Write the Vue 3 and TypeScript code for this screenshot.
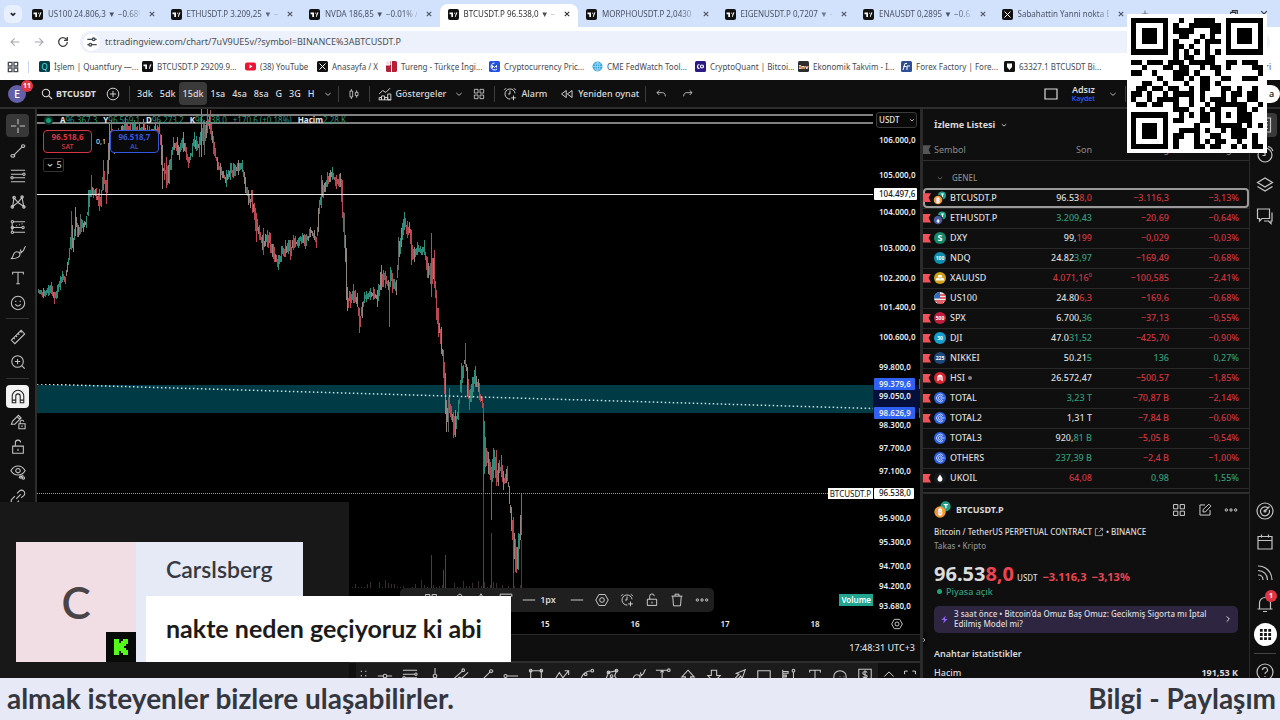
<script setup lang="ts">
const I: Record<string, string> = {
  cross: 'M9 1v6M9 11v6M1 9h6M11 9h6',
  trend: 'M4 14L14 4M3.2 13.2a1.4 1.4 0 1 0 0 2.4a1.4 1.4 0 1 0 0-2.4M14.8 2.2a1.4 1.4 0 1 0 0 2.6a1.4 1.4 0 1 0 0-2.6',
  fib: 'M1 2.500h16M1 7h13M4 11h13M1 15.500h16M17 7a1.300 1.300 0 1 0-2.600 0a1.300 1.300 0 1 0 2.600 0M3.600 11a1.300 1.300 0 1 0-2.600 0a1.300 1.300 0 1 0 2.600 0',
  pattern: 'M3 14L4.500 4.500L9 9.500L13.500 4L15.500 14L9 9.500zM4 14.500a1.400 1.400 0 1 0-2.800 0a1.400 1.400 0 1 0 2.800 0M6 4a1.400 1.400 0 1 0-2.800 0a1.400 1.400 0 1 0 2.800 0M15 3.500a1.400 1.400 0 1 0-2.800 0a1.400 1.400 0 1 0 2.800 0M17 14.500a1.400 1.400 0 1 0-2.800 0a1.400 1.400 0 1 0 2.800 0',
  forecast: 'M4 3h13M4 9.500h9M4 15h13M2.500 4.500v9M4 3a1.300 1.300 0 1 0-2.600 0a1.300 1.300 0 1 0 2.600 0M4 9.500a1.300 1.300 0 1 0-2.600 0a1.300 1.300 0 1 0 2.600 0M4 15a1.300 1.300 0 1 0-2.600 0a1.300 1.300 0 1 0 2.600 0M16 9.500a1.300 1.300 0 1 0-2.600 0a1.300 1.300 0 1 0 2.600 0M10 6.500h1M13 5.500h1M7 7.500h1',
  brush: 'M1 15.500c2.500-1 2-3.500 3.500-6c1.500-2.500 5-2.500 6.500 0c1 3-2 6-10 6zM10 7.500c.5 1.500 2 2 3.500 .5M12 5c-.5 2 1 3.500 2.500 2c1.500-1.500 1.500-4 3-5.500',
  text: 'M3 5V2.500h12V5M9 2.500v13M7 15.500h4',
  smile: 'M16.500 9a7.500 7.500 0 1 0-15 0a7.500 7.500 0 1 0 15 0M6 10.500c1.500 2.500 4.500 2.500 6 0M6.500 6.500v1.500M11.500 6.500v1.500',
  ruler: 'M1.500 12.500L12.500 1.500L16.500 5.500L5.500 16.500zM4 10l1.500 1.500M6.500 7.500L8 9M9 5l1.500 1.500M11.500 2.500L13 4',
  zoom: 'M15 8.500a6.500 6.500 0 1 0-13 0a6.500 6.500 0 1 0 13 0M13.200 13.200L16.500 16.500M8.500 5.500v6M5.500 8.500h6',
  magnet: 'M2.500 15.500V8a6.500 6.500 0 0 1 13 0v7.500h-4V8a2.500 2.500 0 0 0-5 0v7.500zM2.500 12.500h4M11.500 12.500h4',
  pencilLock: 'M1.500 11.500L3 8L9.500 1.500L12.500 4.500L5.500 11.500zM8 3l3 3M10 11h7v5.500h-7zM11.500 11V9.500a2 2 0 0 1 4-1M13.500 13v1.500',
  lock: 'M3 8h12v8H3zM6 8V4.500a3 3 0 0 1 6-.5M9 11v2.500',
  eye: 'M1 7.500c4-7 12-7 16 0c-4 6.500-12 6.500-16 0zM11.500 7.500a2.500 2.500 0 1 0-5 0a2.500 2.500 0 1 0 5 0M10 15.500l5-3M12 13.500a1.300 1.300 0 1 0 .1 0M15 14.500a1.300 1.300 0 1 0 .1 0',
  link: 'M7 11L12 6M8 5l2.500-2.500a3 3 0 0 1 5 5L12.500 10M5.500 8L2.500 11a3 3 0 0 0 5 5L10 13',
  search: 'M13 7.500a5.500 5.500 0 1 0-11 0a5.500 5.500 0 1 0 11 0M11.500 11.500L16.500 16.500',
  plusC: 'M16.500 9a7.500 7.500 0 1 0-15 0a7.500 7.500 0 1 0 15 0M9 5v8M5 9h8',
  chev: 'M5 7.500L9 11L13 7.500',
  right: 'M7 5L11 9L7 13',
  candles: 'M3 4.500h4v9H3zM5 1.500v3M5 13.500v3M11 6.500h4v5h-4zM13 3.500v3M13 11.500v3',
  indic: 'M1.500 9L6 4.500L10 7L15.500 1.500M1.500 16.500v-3h3v3M4.500 16.500v-5h4v5M8.500 16.500v-3h4v3M12.500 16.500V9h4v7.500zM1 16.500h16',
  grid: 'M2 2h5.500v5.500H2zM10.500 2H16v5.500h-5.500zM2 10.500h5.500V16H2zM10.500 10.500H16V16h-5.500z',
  alarm: 'M15.500 8a6.500 6.500 0 1 0-6 7.500M9 4.500V9H6.500M1.500 4L4 1.500M14 1.500L16.500 4M10.500 14h6M13.500 11v6',
  replay: 'M8 4.500v9L2 9zM15.500 4.500v9L9.500 9z',
  undo: 'M3 7h8c3 0 4.500 2 4.500 5.500M6.500 3.500L3 7L6.500 10.500',
  redo: 'M15 7H7c-3 0-4.500 2-4.500 5.500M11.500 3.500L15 7L11.500 10.500',
  square: 'M3 4h12v10H3z',
  hex: 'M5 2h8l4 7l-4 7H5L1 9zM12 9a3 3 0 1 0-6 0a3 3 0 1 0 6 0',
  trash: 'M2 4h14M6.500 4V1.500h5V4M3.500 4L4.500 16.500h9L14.500 4',
  dots: 'M4.500 9a1.500 1.500 0 1 0-3 0a1.500 1.500 0 1 0 3 0M10.500 9a1.500 1.500 0 1 0-3 0a1.500 1.500 0 1 0 3 0M16.500 9a1.500 1.500 0 1 0-3 0a1.500 1.500 0 1 0 3 0',
  line: 'M1 9h16',
  list: 'M3.500 2h11v14h-11zM6 5.500h6M6 9h6M6 12.500h6',
  clock: 'M16 10a7 7 0 1 0-14 0a7 7 0 1 0 14 0M9 6v4.500H6.500M12 1.500c2.500.5 4 2 5 4.500',
  layers: 'M1.500 6.500L9 2L16.500 6.500L9 11zM1.500 10.500L9 15L16.500 10.500',
  chat: 'M1.500 2h12v9.500H6L3.500 14v-2.500h-2zM16 5.500v8.500h-1v2.500L12.500 14H8',
  target: 'M17 9a8 8 0 1 0-16 0a8 8 0 1 0 16 0M12.500 6.500a4.500 4.500 0 1 0 .8 1.500M9 9l4.500-4.500M10 9a1 1 0 1 0-2 0a1 1 0 1 0 2 0',
  cal: 'M2 3.500h14v12.500H2zM2 7.500h14M5.500 1.500v3M12.500 1.500v3',
  rss: 'M2 2c8 0 14 6 14 14M2 6.500c5.500 0 9.500 4 9.500 9.500M2 11c3 0 5 2 5 5M3 15.500h.5',
  bell: 'M1.500 14h15M3.500 14V8a5.500 5.500 0 0 1 11 0v6M7 16.500h4',
  help: 'M17 9a8 8 0 1 0-16 0a8 8 0 1 0 16 0M6.500 7a2.500 2.500 0 1 1 3.500 2.300c-.8.4-1 .8-1 1.700M9 13v1',
  edit: 'M9 2.500H2.500v13h13V9M6.500 11.500v-3L14 1.500L16.500 4L9.500 11.500z',
  back: 'M15.500 9H3M8.500 3.500L3 9L8.500 14.500',
  fwd: 'M2.500 9H15M9.500 3.500L15 9L9.500 14.500',
  reload: 'M14.500 5.500A6.500 6.500 0 1 0 15.500 9M15.500 1.500V6.500H10.500',
  tune: 'M2 5h7M13.500 5h2.500M2 13h2.500M9 13h7M13.500 5a2 2 0 1 0-4 0a2 2 0 1 0 4 0M8.500 13a2 2 0 1 0-4 0a2 2 0 1 0 4 0',
  close: 'M4 4l10 10M14 4L4 14',
  ext: 'M7 3H2.500v12.500H15V11M10.500 2.500H15.500V7.500M15.500 2.500L8.500 9.500',
  hline: 'M1 9h6M11 9h6M11 9a2 2 0 1 0-4 0a2 2 0 1 0 4 0',
  vline: 'M9 0v7M9 11v7M11 9a2 2 0 1 0-4 0a2 2 0 1 0 4 0',
  channel: 'M1 12L11 3M6 15L17 5M13 2.500a1.500 1.500 0 1 0-3 0a1.500 1.500 0 1 0 3 0M9 12a1.500 1.500 0 1 0-3 0',
  ray: 'M4.500 9H17M4.500 9a1.700 1.700 0 1 0-3.400 0a1.700 1.700 0 1 0 3.400 0',
  rect: 'M3 3h12v12H3zM4.500 3a1.500 1.500 0 1 0-3 0a1.500 1.500 0 1 0 3 0M16.500 3a1.500 1.500 0 1 0-3 0a1.500 1.500 0 1 0 3 0',
  zig: 'M1 13L6 5L10 11L16.500 3M12 3h4.500v5',
  arc: 'M2 14C3 7 8 3 14 3M16.500 3a1.500 1.500 0 1 0-3 0a1.500 1.500 0 1 0 3 0M9 7a1.500 1.500 0 1 0-3 0a1.500 1.500 0 1 0 3 0',
  path: 'M2 13L5 5L14 3L12 9L15 13L8 11zM6.500 5a1.500 1.500 0 1 0-3 0a1.500 1.500 0 1 0 3 0M15.500 3a1.500 1.500 0 1 0-3 0a1.500 1.500 0 1 0 3 0M10 9a1.500 1.500 0 1 0-3 0a1.500 1.500 0 1 0 3 0',
  anchor: 'M1 2.500h13M8 2.500V16M17 2.500a1.500 1.500 0 1 0-3 0a1.500 1.500 0 1 0 3 0M6 5l2-2l2 2',
  up: 'M9 2.500L16 10h-4v6H6v-6H2z',
  down: 'M6 2.500h6v6h4L9 15.500L2 8.500h4z',
  arrow: 'M2 16L1.500 15L9 7L6 6L16 2L12.500 12L11 9L4 16z',
  box: 'M2 3h14v12H2z',
  volp: 'M2 2v14M2 4h6v2H2M2 8h4v2H2M2 12h6M14 4v12M15.500 3a1.500 1.500 0 1 0-3 0a1.500 1.500 0 1 0 3 0',
  circ: 'M16 10a7 7 0 1 0-14 0a7 7 0 1 0 14 0M9 9.500v1M13.500 9.500v1',
  dollar: 'M2 1.500h14v12H2zM9 2.500v10M11.500 5c-1-1.500-5-1.500-5 .8c0 2.500 5 1 5 3.500c0 2-4 2-5 .3M9 13.500v4',
  chevUp: 'M3 11L9 5L15 11',
  brk: 'M2 8V4h4M12 4h4v4',
  grip: 'M6 3v1.500M6 8v1.500M6 13v1.500M11 3v1.500M11 8v1.500M11 13v1.500',
}

const tabs = [
  { t: 'US100 24.806,3 ▼ −0.68%' }, { t: 'ETHUSDT.P 3.209,25 ▼ −0' }, { t: 'NVDA 186,85 ▼ −0.01% A' },
  { t: 'BTCUSDT.P 96.538,0 ▼ −3', on: true }, { t: 'MORPHOUSDT.P 2,0430 ▼' }, { t: 'EIGENUSDT.P 0,7207 ▼ −' },
  { t: 'ENAUSDT 0,2895 ▼ −0.62' }, { t: 'Sabahattin Yanni nokta Et', x: true },
]
const marks = [
  { t: 'İşlem | Quantfury —...', c: '#0c3b45', g: 'Q', w: '' }, { t: 'BTCUSDT.P 29209.9...', c: '#111', g: 'tv', w: '' },
  { t: '(38) YouTube', c: '#f01232', g: 'yt', w: 'w72' }, { t: 'Anasayfa / X', c: '#111', g: 'x', w: 'w69' },
  { t: 'Tureng - Türkçe İngi...', c: '#b3203a', g: 't', w: '' }, { t: 'Cryptocurrency Pric...', c: '#2451e0', g: 'm', w: '' },
  { t: 'CME FedWatch Tool...', c: '#35a5dc', g: 'globe', w: '' }, { t: 'CryptoQuant | Bitcoi...', c: '#2b1a86', g: 'cq', w: '' },
  { t: 'Ekonomik Takvim - I...', c: '#2c2c2c', g: 'Inv', w: '' }, { t: 'Forex Factory | Fore...', c: '#2e4f95', g: 'ff', w: '' },
  { t: '63327.1 BTCUSDT Bi...', c: '#111', g: 'sh', w: '' },
]
const frames = ['3dk', '5dk', '15dk', '1sa', '4sa', '8sa', 'G', '3G', 'H']
const tools = [
  ['cross', 'trend', 'fib', 'pattern', 'forecast', 'brush', 'text', 'smile'],
  ['ruler', 'zoom'],
  ['magnet', 'pencilLock', 'lock', 'eye', 'link'],
]

type Row = { s: string; a: string; b: string; bc: string; d: string; p: string; up?: boolean; flag: boolean; k: string; c: string; g?: string; sup?: string; dot?: boolean }
const rows: Row[] = [
  { s: 'BTCUSDT.P', a: '96.53', b: '8,0', bc: 'r', d: '−3.116,3', p: '−3,13%', flag: true, k: 'pair', c: '#f09a36', g: '₿' },
  { s: 'ETHUSDT.P', a: '', b: '3.209,43', bc: 'g', d: '−20,69', p: '−0,64%', flag: true, k: 'pair', c: '#4a5a9e', g: '♦' },
  { s: 'DXY', a: '99,', b: '199', bc: 'r', d: '−0,029', p: '−0,03%', flag: true, k: 'txt', c: '#178a6c', g: 'S' },
  { s: 'NDQ', a: '24.82', b: '3,97', bc: 'g', d: '−169,49', p: '−0,68%', flag: false, k: 'txt', c: '#0f8fb0', g: '100' },
  { s: 'XAUUSD', a: '', b: '4.071,16', sup: '0', bc: 'r', d: '−100,585', p: '−2,41%', flag: true, k: 'gold', c: '#cfa21a' },
  { s: 'US100', a: '24.80', b: '6,3', bc: 'r', d: '−169,6', p: '−0,68%', flag: false, k: 'us', c: '#e8e8ee' },
  { s: 'SPX', a: '6.700,', b: '36', bc: 'g', d: '−37,13', p: '−0,55%', flag: true, k: 'txt', c: '#c21f3f', g: '500' },
  { s: 'DJI', a: '47.0', b: '31,52', bc: 'g', d: '−425,70', p: '−0,90%', flag: true, k: 'txt', c: '#159fd0', g: '30' },
  { s: 'NIKKEI', a: '50.21', b: '5', bc: 'g', d: '136', p: '0,27%', up: true, flag: true, k: 'txt', c: '#1f4a7d', g: '225' },
  { s: 'HSI', dot: true, a: '26.572,47', b: '', bc: 'g', d: '−500,57', p: '−1,85%', flag: true, k: 'hsi', c: '#d92632' },
  { s: 'TOTAL', a: '', b: '3,23 T', bc: 'g', d: '−70,87 B', p: '−2,14%', flag: true, k: 'total', c: '#2f62e6' },
  { s: 'TOTAL2', a: '1,31 T', b: '', bc: 'g', d: '−7,84 B', p: '−0,60%', flag: true, k: 'total', c: '#2f62e6' },
  { s: 'TOTAL3', a: '920,', b: '81 B', bc: 'g', d: '−5,05 B', p: '−0,54%', flag: false, k: 'total', c: '#2f62e6' },
  { s: 'OTHERS', a: '', b: '237,39 B', bc: 'g', d: '−2,4 B', p: '−1,00%', flag: false, k: 'total', c: '#2f62e6' },
  { s: 'UKOIL', a: '', b: '64,08', bc: 'r', d: '0,98', p: '1,55%', up: true, flag: true, k: 'oil', c: '#17191c' },
]

const prices: [string, number][] = [
  ['106.000,0', 140], ['105.000,0', 175], ['104.000,0', 212], ['103.000,0', 248], ['102.200,0', 278], ['101.400,0', 307],
  ['100.600,0', 337], ['99.800,0', 367], ['99.050,0', 396], ['98.300,0', 425], ['97.700,0', 448], ['97.100,0', 471],
  ['95.900,0', 518], ['95.300,0', 542], ['94.700,0', 566], ['94.200,0', 586], ['93.680,0', 606],
]

/* price envelope: x, high, low */
const env: number[][] = [
  [38, 289, 296], [43, 288, 298], [48, 285, 296], [51, 282, 294], [54, 292, 304], [57, 285, 298], [60, 276, 290], [62, 271, 282], [65, 277, 284],
  [67, 262, 272], [69, 248, 260], [71, 211, 250], [73, 238, 252], [75, 207, 236], [78, 225, 237], [80, 214, 234], [83, 223, 232], [86, 216, 228],
  [88, 190, 216], [91, 175, 197], [93, 188, 198], [96, 188, 200], [99, 189, 211], [101, 190, 207], [103, 160, 190], [105, 180, 192], [106, 180, 204], [107, 160, 193],
  [109, 124, 160], [111, 120, 143], [114, 140, 154], [118, 128, 142], [125, 118, 134], [130, 123, 140], [134, 120, 134], [139, 124, 142], [143, 119, 134],
  [149, 126, 142], [155, 124, 136], [159, 121, 134], [161, 135, 165], [162, 145, 189], [164, 163, 180], [166, 157, 188], [169, 160, 184],
  [171, 150, 170], [173, 137, 150], [177, 137, 155], [179, 147, 160], [183, 132, 152], [186, 147, 160], [188, 157, 168], [192, 143, 157], [194, 132, 147],
  [199, 137, 157], [201, 108, 157], [204, 120, 155], [207, 109, 133], [210, 110, 134], [213, 136, 154], [217, 157, 170], [220, 163, 180], [226, 170, 187],
  [230, 163, 180], [233, 163, 178], [238, 160, 175], [242, 160, 172], [245, 177, 193], [248, 190, 205], [252, 190, 213], [256, 213, 242], [259, 225, 240],
  [263, 228, 255], [267, 230, 247], [270, 233, 253], [274, 247, 262], [278, 255, 270], [281, 246, 262], [285, 240, 257], [290, 240, 260], [293, 235, 250],
  [298, 238, 248], [302, 233, 243], [305, 235, 249], [310, 227, 237], [314, 230, 240], [316, 237, 248], [318, 208, 232], [321, 175, 208], [323, 185, 198],
  [327, 172, 187], [332, 167, 180], [336, 175, 189], [340, 173, 187], [342, 180, 218], [344, 213, 248], [346, 248, 300], [347, 287, 311], [350, 292, 308],
  [353, 284, 303], [357, 293, 307], [359, 308, 333], [362, 302, 318], [364, 292, 303], [370, 288, 300], [373, 287, 300], [377, 290, 307], [381, 265, 290],
  [385, 271, 288], [388, 280, 290], [389, 282, 327], [390, 267, 287], [392, 273, 293], [396, 280, 295], [398, 237, 270], [402, 223, 240], [404, 212, 230], [407, 221, 238],
  [409, 222, 233], [411, 230, 265], [414, 247, 262], [417, 242, 255], [422, 247, 255], [424, 240, 255], [427, 257, 278], [430, 263, 284], [431, 233, 297],
  [432, 258, 284], [434, 250, 288], [436, 290, 320], [438, 308, 337], [441, 327, 354], [443, 350, 378], [445, 373, 414], [446, 400, 432], [448, 397, 432],
  [449, 388, 413], [453, 412, 438], [455, 410, 437], [458, 400, 420], [461, 363, 393], [465, 343, 367], [467, 367, 397], [469, 390, 410], [472, 377, 398],
  [475, 366, 387], [479, 383, 400], [482, 397, 408], [483, 403, 492], [485, 437, 467], [488, 452, 474], [490, 462, 480], [491, 467, 520], [493, 448, 478],
  [496, 450, 486], [498, 463, 486], [501, 455, 477], [503, 471, 490], [507, 466, 481], [509, 486, 504], [511, 507, 531], [513, 517, 573], [516, 547, 573],
  [518, 533, 570], [520, 515, 540], [521, 493, 535],
]
let seed = 7
const rnd = () => (seed = (seed * 16807) % 2147483647) / 2147483647
const paths = { up: '', down: '', pale: '', dim: '' }
let prev = 292
for (let x = 38; x <= 521; x++) {
  const i = Math.max(0, env.findIndex((e, k) => k > 0 && e[0] >= x) - 1)
  const a = env[i], b = env[i + 1]
  const f = (x - a[0]) / (b[0] - a[0])
  const hi = a[1] + (b[1] - a[1]) * f, lo = a[2] + (b[2] - a[2]) * f
  const h = lo - hi
  const y1 = Math.round(hi + rnd() * h * (x === b[0] ? 0 : 0.5))
  const y2 = Math.round(lo - rnd() * h * (x === b[0] ? 0 : 0.45))
  const mid = (y1 + y2) / 2
  const r = rnd()
  const q = h / 4
  paths[r < 0.25 ? 'pale' : r < 0.35 ? 'dim' : mid > prev ? 'down' : 'up'] += `M${x}.5 ${y1}V${y2}`
  if (r > 0.6) paths[mid > prev ? 'down' : 'up'] += `M${x}.5 ${Math.round(mid - q)}V${Math.round(mid + q)}`
  prev = mid
}
let vol = ''
for (let x = 352; x < 521; x += 3) vol += `M${x}.5 588V${Math.round(588 - rnd() * rnd() * 9)}`

const qr = [
  '1111111..1..1111..1111111',
  '1.....1.1..111111.1.....1',
  '1.111.1.1111...11.1.111.1',
  '1.111.1..11..1.1..1.111.1',
  '1.111.1.1...1.111.1.111.1',
  '1.....1.11.1..1...1.....1',
  '1111111.1.1.1.1.1.1111111',
  '........1.11..11.........',
  '11.111.111.11111..11.111.',
  '..1...11.11..1.11.1....11',
  '11..1...111.1...1.......1',
  '.....1..11.1.11..11..111.',
  '..11..1...1..11.1........',
  '.11.11.11..1.11..11.1..1.',
  '11.1..1.1111.1...1.11.11.',
  '1..1.1111..1.1.111.1..11.',
  '.11.11..1..1..1.111111..1',
  '........111..1.11...11.1.',
  '1111111..1.1.11.1.1.111..',
  '1.....1.11...11.1...111..',
  '1.111.1.....1...11111.1.1',
  '1.111.1..1111.1..1.111...',
  '1.111.1.11..1..11..111.1.',
  '1.....1.1...1.1.11..1..1.',
  '1111111.1...11.11..1.1.11',
]
const qrPath = qr.map((r, y) => [...r].map((c, x) => (c === '1' ? `M${x} ${y}h1v1h-1z` : '')).join('')).join('')

const railTop = ['list', 'clock', 'layers', 'chat']
const railLow = ['target', 'cal', 'rss', 'bell']
const drawBar = ['hline', 'fib', 'vline', 'channel', 'trend', 'ray', 'rect', 'zig', 'arc', 'path', 'brush', 'anchor', 'up', 'down', 'arrow', 'box', 'volp', 'text', 'circ', 'dollar']
</script>

<template>
  <div class="page">
    <div class="desk">
      <header class="browser">
        <div class="tabs">
          <button class="tabmenu" aria-label="Sekme ara"><svg class="i10" viewBox="0 0 18 18"><path :d="I.chev" stroke-width="3" /></svg></button>
          <div class="tablist">
            <button v-for="t in tabs" :key="t.t" class="tab" :class="{ on: t.on }">
              <svg class="fav" viewBox="0 0 11 11">
                <rect width="11" height="11" rx="2" fill="#111" />
                <path v-if="t.x" d="M2.500 2.500L8.500 8.500M8.500 2.500L2.500 8.500" stroke="#fff" />
                <path v-else d="M1.500 3.500h3.500v4.500h-1.700v-2.800h-1.800zM7.500 8L9.500 3.500H8L6.800 8zM6.300 3.400a.8.8 0 1 1 0 1.600" fill="#fff" />
              </svg>
              <span class="tt">{{ t.t }}</span>
              <svg class="i8" viewBox="0 0 18 18"><path :d="I.close" stroke-width="2.500" /></svg>
            </button>
          </div>
          <div class="winctl">
            <svg class="i10" viewBox="0 0 18 18"><path d="M9 3v12M3 9h12" /></svg>
            <svg class="i10 push" viewBox="0 0 18 18"><path d="M3 6h9v9H3zM6 6V3h9v9h-3" stroke-width="2" /></svg>
            <svg class="i10" viewBox="0 0 18 18"><path :d="I.close" stroke-width="2" /></svg>
          </div>
        </div>
        <div class="nav">
          <button aria-label="Geri" class="pale"><svg class="i12" viewBox="0 0 18 18"><path :d="I.back" stroke-width="1.600" /></svg></button>
          <button aria-label="İleri" class="pale"><svg class="i12" viewBox="0 0 18 18"><path :d="I.fwd" stroke-width="1.600" /></svg></button>
          <button aria-label="Yenile"><svg class="i12" viewBox="0 0 18 18"><path :d="I.reload" stroke-width="2" /></svg></button>
          <label class="url"><span class="tune"><svg class="i12" viewBox="0 0 18 18"><path :d="I.tune" stroke-width="2" /></svg></span>
            <input aria-label="Adres" type="text" value="tr.tradingview.com/chart/7uV9UE5v/?symbol=BINANCE%3ABTCUSDT.P" /></label>
        </div>
        <nav class="marks">
          <svg class="i12 apps" viewBox="0 0 18 18"><path :d="I.grid" stroke-width="2" /></svg><i class="msep"></i>
          <a v-for="m in marks" :key="m.t" href="#" :class="m.w">
            <svg class="fav" viewBox="0 0 11 11">
              <circle v-if="m.g === 'globe'" cx="5.500" cy="5.500" r="5" :fill="m.c" />
              <rect v-else-if="m.g === 'yt'" y="1.500" width="11" height="8" rx="2" :fill="m.c" />
              <rect v-else width="11" height="11" rx="1.500" :fill="m.c" />
              <path v-if="m.g === 'globe'" d="M.5 5.500h10M5.500 .5v10M1.500 3h8M1.500 8h8M5.500 .5c-3 3-3 7 0 10M5.500 .5c3 3 3 7 0 10" stroke="#bfe6f8" stroke-width=".6" fill="none" />
              <path v-if="m.g === 'yt'" d="M4.500 3.500L7.500 5.500L4.500 7.500z" fill="#fff" />
              <path v-if="m.g === 'x'" d="M2.500 2.500L8.500 8.500M8.500 2.500L2.500 8.500" stroke="#fff" />
              <path v-if="m.g === 'tv'" d="M1.500 3.500h3.500v4.500h-1.700v-2.800h-1.800zM7.500 8L9.500 3.500H8L6.800 8z" fill="#fff" />
              <path v-if="m.g === 't'" d="M0 0h4v4H0zM5.500 0v11" fill="#f0dede" stroke="#fff" />
              <path v-if="m.g === 'm'" d="M5.500 2a3.500 3.500 0 1 0 2.500 6M3.500 7V4.500L5.500 6.500L7.500 4.500V6.500" stroke="#fff" fill="none" />
              <path v-if="m.g === 'cq'" d="M4.500 3.500a2 2 0 1 0 0 4M8.500 5.500a1.500 1.500 0 1 0-3 0a1.500 1.500 0 1 0 3 0" stroke="#fff" stroke-width="1.200" fill="none" />
              <path v-if="m.g === 'ff'" d="M2 9L4 2.500H6M2.500 5.500h3M6 9V5h3" stroke="#fff" fill="none" />
              <path v-if="m.g === 'sh'" d="M3 2.500h5v3.500L5.500 9L3 6z" fill="#fff" />
              <text v-if="m.g === 'Q'" x="5.500" y="8.500" text-anchor="middle" font-size="8" fill="#4de0e0">Q</text>
              <text v-if="m.g === 'Inv'" x="5.500" y="8" text-anchor="middle" font-size="6" font-weight="700" fill="#fff">Inv</text>
            </svg>{{ m.t }}</a>
          <a href="#" class="all">Tüm Yer İşaretleri</a>
        </nav>
      </header>

      <div class="topbar">
        <button class="ava" aria-label="Profil">E<b class="badge">11</b></button>
        <button class="sym"><svg class="i12" viewBox="0 0 18 18"><path :d="I.search" stroke-width="1.600" /></svg><b>BTCUSDT</b></button>
        <button class="ib" aria-label="Sembol ekle"><svg class="i14" viewBox="0 0 18 18"><path :d="I.plusC" /></svg></button>
        <i class="sep"></i>
        <button v-for="f in frames" :key="f" class="tf" :class="{ on: f === '15dk' }">{{ f }}</button>
        <button class="ib n" aria-label="Aralıklar"><svg class="i12" viewBox="0 0 18 18"><path :d="I.chev" /></svg></button>
        <i class="sep"></i>
        <button class="ib c" aria-label="Mumlar"><svg class="i12" viewBox="0 0 18 18"><path :d="I.candles" /></svg></button>
        <i class="sep"></i>
        <button class="lb"><svg class="i14" viewBox="0 0 18 18"><path :d="I.indic" /></svg>Göstergeler</button>
        <button class="ib w" aria-label="Favoriler"><svg class="i12" viewBox="0 0 18 18"><path :d="I.chev" /></svg></button>
        <button class="ib s" aria-label="Şablonlar"><svg class="i12" viewBox="0 0 18 18"><path :d="I.grid" /></svg></button>
        <i class="sep"></i>
        <button class="lb"><svg class="i14" viewBox="0 0 18 18"><path :d="I.alarm" /></svg>Alarm</button>
        <button class="lb far"><svg class="i14" viewBox="0 0 18 18"><path :d="I.replay" /></svg>Yeniden oynat</button>
        <i class="sep m"></i>
        <button class="ib" aria-label="Geri al"><svg class="i12" viewBox="0 0 18 18"><path :d="I.undo" /></svg></button>
        <button class="ib redo" aria-label="Yinele"><svg class="i12" viewBox="0 0 18 18"><path :d="I.redo" /></svg></button>
        <div class="topright">
          <svg class="i18" viewBox="0 0 18 18"><path :d="I.square" /></svg>
          <button class="save"><b>Adsız</b><small>Kaydet</small></button>
          <svg class="i12" viewBox="0 0 18 18"><path :d="I.chev" /></svg>
          <i class="sep"></i>
          <button class="pub">a</button>
        </div>
      </div>

      <div class="work">
        <aside class="tools">
          <div v-for="(g, gi) in tools" :key="gi" class="tg" :class="'tg' + gi">
            <button v-for="t in g" :key="t" :aria-label="t" :class="{ on: t === 'cross', white: t === 'magnet' }"><svg class="i16" viewBox="0 0 18 18"><path :d="I[t]" /></svg></button>
          </div>
        </aside>

        <main class="center">
          <div class="pane">
            <svg class="plot" aria-label="BTCUSDT.P grafiği">
              <g transform="translate(-37 -109)">
                <rect x="37" y="385" width="100%" height="28" fill="#003a44" />
                <g fill="none" stroke-width="1">
                  <path :d="vol" stroke="#3c2b2f" />
                  <path d="M431.500 588V555M491.500 588V533M521.500 588V540" stroke="#2f4a45" />
                  <path d="M445.500 588V555M443.500 588V570M483.500 588V492M513.500 588V573" stroke="#74303a" />
                  <path :d="paths.dim" stroke="#5d6764" />
                  <path :d="paths.pale" stroke="#92857f" />
                  <path :d="paths.up" stroke="#2c8d7d" />
                  <path :d="paths.down" stroke="#b8474f" />
                </g>
                <rect x="37" y="114" width="100%" height="2" fill="#808080" />
                <rect x="37" y="122" width="100%" height="2" fill="#808080" />
                <rect x="37" y="194" width="100%" height="1" fill="#e8e8e8" />
                <svg x="37" y="384" width="100%" height="26" viewBox="0 0 836 26" preserveAspectRatio="none"><path d="M0 0L836 24.500" stroke="#cfe0e2" stroke-width="1.500" stroke-dasharray="1.500 2.500" /></svg>
                <svg x="37" y="493" width="100%" height="1"><path d="M0 .5H3000" stroke="#9a9a9a" stroke-dasharray="1 1" /></svg>
              </g>
            </svg>
            <div class="legend"><i class="live"></i><span><b>A</b>96.367,3</span><span><b>Y</b>96.569,1</span><span><b>D</b>96.273,2</span><span><b>K</b>96.538,0</span><span>+170,6 (+0,18%)</span><span><b>Hacim</b>2,28 K</span></div>
            <div class="trade">
              <button class="sell"><b>96.518,6</b>SAT</button><span>0,1</span><button class="buy"><b>96.518,7</b>AL</button>
            </div>
            <button class="five"><svg class="i10" viewBox="0 0 18 18"><path :d="I.chev" stroke-width="2" /></svg>5</button>
            <span class="tag symtag">BTCUSDT.P</span>
            <span class="tag voltag">Volume</span>
            <div class="float">
              <button aria-label="Şablon"><svg class="i14" viewBox="0 0 18 18"><path :d="I.grid" /></svg></button>
              <button aria-label="Kalem"><svg class="i14" viewBox="0 0 18 18"><path d="M2 16L3 11.500L12.500 2a2.500 2.500 0 0 1 3.500 3.500L6.500 15z" /></svg></button>
              <button aria-label="Dolgu"><svg class="i14" viewBox="0 0 18 18"><path d="M9 1L13.500 9a5 5 0 1 1-9 0z" /></svg></button>
              <button aria-label="Yazı"><svg class="i14" viewBox="0 0 18 18"><path d="M1.500 5V1.500h15V5M4.500 5h9M9 5v11" /></svg></button>
              <button class="px"><svg class="i14" viewBox="0 0 18 18"><path :d="I.line" /></svg>1px</button>
              <button v-for="f in ['line', 'hex', 'alarm', 'lock', 'trash', 'dots']" :key="f" :aria-label="f"><svg class="i14" viewBox="0 0 18 18"><path :d="I[f]" /></svg></button>
            </div>
          </div>
          <div class="axis">
            <label class="cur"><select aria-label="Para birimi"><option>USDT</option></select><svg class="i8" viewBox="0 0 18 18"><path :d="I.chev" stroke-width="2" /></svg></label>
            <svg class="ax">
              <g transform="translate(-873 -109)">
                <rect x="873" y="385" width="47" height="28" fill="#04103c" />
                <rect x="874" y="378" width="41" height="12" rx="1" fill="#2f62f2" />
                <rect x="874" y="407" width="41" height="12" rx="1" fill="#2f62f2" />
                <rect x="919" y="379" width="2" height="10" fill="#2f62f2" />
                <rect x="919" y="408" width="2" height="10" fill="#2f62f2" />
                <rect x="874" y="188" width="43" height="12" rx="1" fill="#fff" />
                <rect x="874" y="488" width="40" height="11" rx="1" fill="#fff" />
                <text v-for="p in prices" :key="p[0]" x="879" :y="p[1] + 3">{{ p[0] }}</text>
                <text x="879" y="387">99.379,6</text>
                <text x="879" y="416">98.626,9</text>
                <text x="879" y="197" class="k">104.497,6</text>
                <text x="879" y="496" class="k">96.538,0</text>
              </g>
            </svg>
          </div>
          <div class="times">
            <div class="tl"><span>15</span><span>16</span><span>17</span><span>18</span></div>
            <svg class="i12" viewBox="0 0 18 18"><path :d="I.hex" /></svg>
          </div>
          <div class="clock">17:48:31 UTC+3</div>
          <div class="drawbar">
            <div class="inner">
              <svg class="grip" viewBox="0 0 18 18"><path :d="I.grip" /></svg>
              <button v-for="d in drawBar" :key="d" :aria-label="d"><svg class="i16" viewBox="0 0 18 18"><path :d="I[d]" /></svg></button>
            </div>
            <div class="rest"><svg class="i14" viewBox="0 0 18 18"><path :d="I.chevUp" /></svg><svg class="i14" viewBox="0 0 18 18"><path :d="I.brk" /></svg></div>
          </div>
        </main>

        <section class="side">
          <button class="handle" aria-label="Paneli kapat"><svg class="i8" viewBox="0 0 18 18"><path :d="I.right" stroke-width="2" /></svg></button>
          <button class="wl">İzleme Listesi<svg class="i10" viewBox="0 0 18 18"><path :d="I.chev" stroke-width="1.500" /></svg></button>
          <table>
            <thead><tr><th><i class="flag gray"></i><span class="sh">Sembol</span></th><th>Son</th><th>Değ</th><th>Değ%</th></tr></thead>
            <tbody>
              <tr class="grp"><td colspan="4"><svg class="i10" viewBox="0 0 18 18"><path :d="I.chev" /></svg>GENEL</td></tr>
              <tr v-for="(r, ri) in rows" :key="r.s" :class="{ sel: ri === 0 }">
                <td>
                  <div class="sc"><i class="flag" :class="{ none: !r.flag }"></i>
                    <svg class="logo" viewBox="0 0 14 14">
                      <template v-if="r.k === 'pair'"><circle cx="9" cy="4.500" r="4" fill="#1f9d86" /><path d="M8 3h3M9.500 3v3" stroke="#fff" /><circle cx="5" cy="9" r="5" fill="#0f0f0f" /><circle cx="5" cy="9" r="4.300" :fill="r.c" /><text x="5" y="11.500" class="lg7">{{ r.g }}</text></template>
                      <template v-else>
                        <circle cx="7" cy="7" r="6" :fill="r.c" />
                        <text v-if="r.k === 'txt'" x="7" :y="r.g === 'S' ? 10 : 9" :class="r.g === 'S' ? 'lg9' : 'lg5'">{{ r.g }}</text>
                        <path v-if="r.k === 'gold'" d="M5.500 4h3l1 2.500h-5zM3.500 7h3l.8 2.500H2.500zM7.500 7h3l1 2.500H7z" fill="#fff" />
                        <path v-if="r.k === 'us'" d="M7 4h5.300M7 7h6M2 10h10M4 12h6" stroke="#e0383f" stroke-width="1.300" />
                        <path v-if="r.k === 'us'" d="M7 1v6.500H1A6 6 0 0 1 7 1z" fill="#2d6cc0" />
                        <path v-if="r.k === 'hsi'" d="M5 10V6.500a2 2 0 0 1 4 0V10M7 5v4" stroke="#fff" stroke-width="1.300" fill="none" />
                        <path v-if="r.k === 'total'" d="M10 4.500A3.700 3.700 0 1 0 10 9.500M9 6a2 2 0 1 0 0 2.200M7 7h4.500" stroke="#cfdcff" stroke-width=".9" fill="none" />
                        <path v-if="r.k === 'oil'" d="M7 3.500c1.500 2 2.500 3.500 2.500 4.700a2.500 2.500 0 0 1-5 0C4.500 7 5.500 5.500 7 3.500z" fill="#fff" />
                      </template>
                    </svg>{{ r.s }}<i v-if="r.dot" class="hd"></i></div>
                </td>
                <td>{{ r.a }}<span :class="r.bc">{{ r.b }}<sup v-if="r.sup">{{ r.sup }}</sup></span></td>
                <td :class="r.up ? 'g' : 'r'">{{ r.d }}</td>
                <td :class="r.up ? 'g' : 'r'">{{ r.p }}</td>
              </tr>
            </tbody>
          </table>

          <div class="detail">
            <div class="dh">
              <svg class="biglogo" viewBox="0 0 14 14"><circle cx="9.500" cy="4.500" r="4.200" fill="#1f9d86" /><path d="M8 3h3.500M9.800 3v3" stroke="#fff" /><circle cx="5" cy="9" r="4.700" fill="#f09a36" /><text x="5" y="11.500" class="lg7">₿</text></svg>
              <b>BTCUSDT.P</b>
              <span class="dib"><svg v-for="k in ['grid', 'edit', 'dots']" :key="k" class="i14" viewBox="0 0 18 18"><path :d="I[k]" /></svg></span>
            </div>
            <p class="full"><span>Bitcoin / TetherUS PERPETUAL CONTRACT</span><svg class="i10" viewBox="0 0 18 18"><path :d="I.ext" /></svg><span>• BINANCE</span></p>
            <p class="kind">Takas • Kripto</p>
            <p class="big"><b class="n">96.53<span>8,0</span></b><small>USDT</small><b class="ch">−3.116,3</b><b class="ch">−3,13%</b></p>
            <p class="open"><i></i>Piyasa açık</p>
            <a href="#" class="news"><svg class="bolt" viewBox="0 0 10 10"><path d="M6.500 .5L1.500 5.500h3L3.500 9.500L8.500 4.500h-3z" /></svg><span>3 saat önce • Bitcoin’da Omuz Baş Omuz: Gecikmiş Sigorta mı İptal Edilmiş Model mi?</span><svg class="i12" viewBox="0 0 18 18"><path :d="I.right" stroke-width="1.500" /></svg></a>
            <p class="key">Anahtar istatistikler</p>
            <p class="volr"><span>Hacim</span><b>191,53 K</b></p>
          </div>
        </section>

        <aside class="rail">
          <button v-for="k in railTop" :key="k" :aria-label="k" :class="{ on: k === 'list' }"><svg class="i18" viewBox="0 0 18 18"><path :d="I[k]" /></svg></button>
          <div class="low">
            <button v-for="k in railLow" :key="k" :aria-label="k"><svg class="i18" viewBox="0 0 18 18"><path :d="I[k]" /></svg><b v-if="k === 'bell'" class="badge">1</b></button>
            <button class="round" aria-label="Uygulamalar"><svg viewBox="0 0 14 14"><path d="M1 1h3v3H1zM5.500 1h3v3h-3zM10 1h3v3h-3zM1 5.500h3v3H1zM5.500 5.500h3v3h-3zM10 5.500h3v3h-3zM1 10h3v3H1zM5.500 10h3v3h-3zM10 10h3v3h-3z" /></svg></button>
            <i class="rs"></i>
            <button aria-label="Yardım"><svg class="i18" viewBox="0 0 18 18"><path :d="I.help" /></svg></button>
          </div>
        </aside>
      </div>

      <div class="qr"><svg viewBox="0 0 25 25" preserveAspectRatio="none" shape-rendering="crispEdges"><path :d="qrPath" /></svg></div>

      <div class="chatbox">
        <div class="face">C<svg viewBox="0 0 30 30"><rect width="30" height="30" fill="#070a06" /><path d="M8 7h5v4h2V9h2V7h5v5h-2v2h-2v2h2v2h2v5h-5v-2h-2v-2h-2v4H8z" fill="#53fc18" /></svg></div>
        <div class="name">Carslsberg</div>
        <div class="msg">nakte neden geçiyoruz ki abi</div>
      </div>
    </div>
    <footer class="ticker"><span class="run">ı almak isteyenler bizlere ulaşabilirler.</span><span>Bilgi - Paylaşım</span></footer>
  </div>
</template>

<style>
html, body { margin: 0; background: #000; }
</style>
<style scoped>
.page { height: 100vh; min-height: 720px; display: flex; flex-direction: column; overflow: hidden; font-family: "Noto Sans", "Open Sans", sans-serif; font-size: 9px; line-height: 12px; color: #dbdbdb; background: #0f0f0f; }
.desk { position: relative; flex: 1; min-height: 0; display: flex; flex-direction: column; overflow: hidden; }
* { box-sizing: border-box; }
button { font: inherit; color: inherit; background: none; border: 0; padding: 0; margin: 0; display: flex; align-items: center; justify-content: center; }
a { color: inherit; text-decoration: none; }
p { margin: 0; }
svg { flex: none; }
.i8, .i10, .i12, .i14, .i16, .i18, .grip { fill: none; stroke: currentColor; stroke-width: 1.2; }
.i8 { width: 8px; height: 8px; }
.i10 { width: 10px; height: 10px; }
.i12 { width: 12px; height: 12px; }
.i14 { width: 14px; height: 14px; }
.i16, .grip { width: 16px; height: 16px; }
.i18 { width: 18px; height: 18px; }

.browser { background: #fff; color: #454a52; flex: none; }
.tabs { height: 27px; background: #d3e2fc; display: flex; align-items: center; padding-left: 4px; }
.tabmenu { width: 18px; height: 18px; border-radius: 6px; background: #e9f0fd; color: #222; }
.tablist { flex: 1; display: flex; min-width: 0; padding-left: 2px; align-self: stretch; align-items: flex-end; }
.tab { position: relative; flex: 1 1 0; min-width: 0; height: 23px; padding: 0 7px 3px 8px; justify-content: flex-start; border-radius: 8px 8px 0 0; color: #4a5364; font-size: 8px; }
.tab.on { background: #fff; color: #333; }
.fav { width: 11px; height: 11px; margin-right: 5px; }
.tt { flex: 1; overflow: hidden; white-space: nowrap; text-align: left; margin-right: 8px; -webkit-mask-image: linear-gradient(90deg, #000 78px, transparent 96px); mask-image: linear-gradient(90deg, #000 78px, transparent 96px); }
.winctl { width: 148px; display: flex; align-items: center; padding: 0 11px 0 8px; color: #333; gap: 20px; }
.push { margin-left: auto; }
.nav { height: 30px; display: flex; align-items: center; padding-left: 3px; }
.nav button { width: 24px; height: 24px; color: #444; }
.nav button.pale { color: #a5a8ad; }
.url { flex: 1; height: 22px; margin: 0 10px 0 5px; display: flex; align-items: center; background: #edf1fb; border-radius: 11px; padding-left: 3px; gap: 5px; }
.tune { width: 17px; height: 17px; border-radius: 50%; background: #fff; display: flex; align-items: center; justify-content: center; }
.url input { flex: 1; border: 0; background: none; outline: 0; font: inherit; color: #4a4f57; padding: 0; }
.marks { height: 23px; display: flex; align-items: center; padding: 0 9px 4px 7px; white-space: nowrap; font-size: 8px; }
.msep { width: 1px; height: 12px; background: #c9d6ee; margin: 0 10px 0 9px; }
.marks a { display: flex; align-items: center; width: 103px; flex: none; }
.marks .fav { margin-right: 4px; }
.marks a.w72 { width: 72px; }
.marks a.w69 { width: 69px; }
.marks a.all { width: auto; margin-left: auto; }

.topbar { height: 29px; flex: none; display: flex; align-items: center; border-bottom: 2px solid #2e2e2e; padding-left: 8px; font-weight: 500; }
.ava { position: relative; width: 18px; height: 18px; border-radius: 50%; background: #635fa8; color: #fff; font-size: 11px; }
.badge { position: absolute; top: -5px; right: -7px; width: 12px; height: 12px; border-radius: 50%; background: #e23544; color: #fff; font-size: 7px; display: flex; align-items: center; justify-content: center; }
.sym { margin-left: 15px; gap: 3px; }
.ib { width: 25px; height: 24px; margin: 0 2px; }
.sym + .ib { margin: 0 4px; }
.ib.n { width: 16px; }
.ib.c { width: 26px; }
.ib.w { margin: 0 1px 0 0; }
.ib.s { width: 12px; margin: 0 1px; }
.ib.redo { margin: 0; }
.sep { width: 1px; height: 16px; background: #3c3c3c; flex: none; }
.sep + .tf { margin-left: 3px; }
.tf { height: 23px; padding: 0 3px 0 4px; border-radius: 4px; }
.tf.on { background: #3a3a3a; }
.lb { gap: 4px; margin-left: 8px; }
.lb.far { margin-left: 13px; }
.ib.s + .sep { margin-left: 8px; }
.sep.m { margin-left: 6px; }
.topright { margin-left: auto; display: flex; align-items: center; }
.save { flex-direction: column; margin: 0 12px; }
.save b { line-height: 11px; font-weight: 600; }
.save small { font-size: 7px; color: #2f62f2; line-height: 8px; }
.topright .sep { margin: 0 137px 0 6px; }
.pub { width: 17px; height: 18px; border-radius: 0 9px 9px 0; background: #fff; color: #111; }
.topright .pub { margin-right: 0; }

.work { flex: 1; min-height: 0; display: flex; }
.tools { width: 37px; flex: none; border-right: 2px solid #2e2e2e; padding-top: 5px; }
.tg { display: flex; flex-direction: column; align-items: center; gap: 2px; padding-bottom: 5px; }
.tg0 { height: 204px; padding-bottom: 3px; justify-content: space-between; gap: 0; }
.tg1, .tg2 { padding-top: 6px; border-top: 1px solid #333; margin: 0 6px; }
.tg button { width: 23px; height: 23px; border-radius: 4px; color: #c4c4c4; }
.tg button.on { background: #383838; }
.tg button.white { background: #f2f2f2; color: #222; }

.center { flex: 1; min-width: 0; display: grid; grid-template: minmax(0, 1fr) 20px 27px 17px / minmax(0, 1fr) 47px; background: #000; }
.pane { position: relative; overflow: hidden; }
.plot, .ax { display: block; width: 100%; height: 100%; }
.legend { position: absolute; left: 9px; top: 5px; display: flex; gap: 6px; align-items: center; color: #279a7b; white-space: nowrap; font-size: 8px; }
.legend b { color: #e8e8e8; }
.live { width: 5px; height: 5px; border-radius: 50%; background: #179a77; margin-right: 3px; box-shadow: 0 0 0 2px #08382c; }
.trade { position: absolute; left: 6px; top: 21px; display: flex; align-items: center; gap: 4px; font-size: 7px; font-weight: 500; }
.trade button { flex-direction: column; width: 49px; height: 23px; border-radius: 4px; border: 1px solid; background: #0a0a0a; font-size: 7px; line-height: 9px; }
.trade b { font-size: 8px; line-height: 10px; }
.trade .sell { color: #d83340; }
.trade .buy { color: #3256e0; }
.five { position: absolute; left: 6px; top: 49px; width: 21px; height: 14px; border: 1px solid #333; border-radius: 2px; gap: 1px; }
.tag { position: absolute; right: 0; font-size: 8px; line-height: 11px; padding: 0 2px; }
.symtag { top: 379px; background: #fff; color: #111; }
.voltag { top: 485px; background: #22a590; color: #fff; font-weight: 600; padding: 0 2px; line-height: 12px; }
.float { position: absolute; left: 363px; top: 479px; height: 24px; background: #1f1f1f; border-radius: 5px; display: flex; align-items: center; padding: 0 0 0 18px; font-weight: 600; }
.float button { width: 25px; height: 22px; color: #d5d5d5; }
.float .px { width: 42px; gap: 4px; margin-right: 4px; }
.axis { position: relative; overflow: hidden; }
.cur { position: absolute; left: 3px; top: 3px; width: 41px; height: 16px; border: 1px solid #3a3a3a; border-radius: 3px; background: #0a0a0a; display: flex; align-items: center; }
.cur select { appearance: none; flex: 1; min-width: 0; border: 0; background: none; color: #e4e4e4; font: 500 8px/12px "Noto Sans", sans-serif; padding: 0 0 0 2px; outline: 0; }
.ax text { font-size: 8px; font-weight: 600; fill: #ececec; }
.ax text.k { fill: #111; font-weight: 500; }
.times { grid-column: 1 / 3; display: flex; align-items: center; font-size: 8px; font-weight: 600; color: #eee; padding-right: 17px; }
.tl { flex: 1; display: flex; padding-left: 463px; }
.tl span { flex: 1 1 0; max-width: 90px; text-align: center; }
.clock { grid-column: 1 / 3; background: #0f0f0f; border-top: 1px solid #2a2a2a; display: flex; align-items: center; justify-content: flex-end; padding-right: 5px; font-weight: 500; }
.drawbar { grid-column: 1 / 3; border-top: 2px solid #2e2e2e; display: flex; overflow: hidden; background: #0f0f0f; align-items: flex-start; }
.inner { margin-left: 319px; flex: 1; display: flex; background: #1b1b1b; padding-top: 5px; color: #c8c8c8; }
.inner button { flex: 1 1 0; }
.rest { width: 42px; display: flex; padding-top: 5px; justify-content: space-around; }

.side { position: relative; width: 330px; flex: none; border-left: 3px solid #2a2a2a; border-right: 1px solid #2a2a2a; overflow: hidden; }
.handle { position: absolute; left: -3px; top: 523px; width: 7px; height: 15px; background: #0c0c0c; border-radius: 3px; }
.wl { height: 32px; padding-left: 11px; gap: 4px; font-weight: 700; }
table { width: 100%; border-collapse: collapse; table-layout: fixed; font-weight: 500; }
th { font-weight: 400; color: #8c8c8c; height: 19px; padding: 0; text-align: right; border-bottom: 1px solid #2e2e2e; }
td { padding: 0; height: 20px; text-align: right; border-bottom: 1px solid #292929; }
th:first-child, td:first-child { text-align: left; width: 86px; }
th:nth-child(2) { width: 83px; }
th:nth-child(3) { width: 77px; }
th:nth-child(4), td:nth-child(4) { padding-right: 10px; width: 80px; }
th .sh { margin-left: 3px; }
.grp td { height: 28px; padding: 8px 0 0 12px; border: 0; color: #8c8c8c; font-size: 8px; }
.grp svg { margin-right: 7px; vertical-align: -2px; }
.sel { outline: 2px solid #9a9a9a; outline-offset: -2px; border-radius: 4px; }
.sc { display: flex; align-items: center; }
.flag { display: inline-block; width: 8px; height: 9px; background: #f0525a; clip-path: polygon(0 0, 100% 0, 70% 50%, 100% 100%, 0 100%); }
.flag.gray { background: #555; vertical-align: -1px; }
.flag.none { visibility: hidden; }
.logo { width: 14px; height: 14px; margin: 0 3px 0 2px; }
.lg5, .lg7, .lg9 { fill: #fff; text-anchor: middle; font-weight: 700; font-size: 5px; }
.lg7 { font-size: 7px; }
.lg9 { font-size: 9px; }
.hd { width: 4px; height: 4px; border-radius: 50%; background: #888; margin-left: 3px; }
sup { font-size: 6px; line-height: 0; }
.r { color: #cf3540; }
.g { color: #2f9d78; }

.detail { border-top: 2px solid #2e2e2e; margin-top: 3px; padding: 7px 11px 0 11px; font-weight: 500; }
.dh { display: flex; align-items: center; height: 18px; }
.dh b { font-size: 9px; margin-left: 5px; }
.biglogo { width: 17px; height: 17px; }
.dib { margin-left: auto; display: flex; gap: 12px; }
.full { display: flex; align-items: center; gap: 2px; margin-top: 7px; white-space: nowrap; font-size: 8px; height: 12px; }
.kind { margin-top: 2px; color: #8c8c8c; height: 12px; font-size: 8px; }
.big { display: flex; align-items: baseline; margin-top: 10px; height: 24px; line-height: 24px; }
.big .n { font-size: 20px; }
.big .n span, .ch { color: #ee4450; }
.big small { font-size: 8px; margin: 0 5px 0 3px; }
.ch { font-size: 11px; margin-right: 5px; }
.open { color: #2f9d78; display: flex; align-items: center; gap: 4px; height: 12px; }
.open i { width: 5px; height: 5px; border-radius: 50%; background: #20a37c; margin-left: 3px; }
.news { display: flex; align-items: center; height: 27px; margin-top: 8px; border-radius: 5px; background: #2e2640; padding: 0 4px 0 6px; line-height: 10px; font-size: 8px; }
.news span { flex: 1; padding: 0 10px 0 5px; }
.bolt { width: 9px; height: 9px; fill: #8d63f0; }
.key { margin-top: 15px; font-weight: 600; }
.volr { display: flex; justify-content: space-between; margin-top: 7px; }

.rail { width: 30px; flex: none; display: flex; flex-direction: column; align-items: center; padding-top: 4px; color: #c4c4c4; overflow: hidden; }
.rail button { position: relative; width: 24px; height: 24px; border-radius: 4px; margin-bottom: 7px; flex: none; }
.rail button.on { background: #3a3a3a; margin-bottom: 5px; }
.low { margin-top: auto; height: 179px; display: flex; flex-direction: column; align-items: center; flex: none; }
.low .badge { top: -2px; right: 0; }
.low .round { background: #fff; border-radius: 50%; width: 23px; height: 23px; margin-bottom: 7px; }
.round svg { width: 13px; height: 13px; fill: #111; }
.rs { width: 22px; height: 1px; background: #444; margin-bottom: 6px; flex: none; }

.qr { position: absolute; right: 13px; top: 14px; width: 140px; height: 139px; background: #fff; padding: 4px; }
.qr svg { display: block; width: 132px; height: 131px; }

.chatbox { position: absolute; left: 0; bottom: 0; width: 349px; height: 176px; background: #181818; padding: 40px 0 0 16px; display: grid; grid-template: 54px 66px / 120px 10px 157px 208px; font-family: Lato, sans-serif; }
.face { position: relative; grid-row: 1 / 3; background: #f0dee4; color: #4a4447; font-size: 44px; font-weight: 600; display: flex; align-items: center; justify-content: center; }
.face svg { position: absolute; right: 0; bottom: 0; width: 30px; height: 30px; }
.name { grid-area: 1 / 2 / 3 / 4; background: #e6eaf6; color: #343943; font-size: 23px; line-height: 54px; padding-left: 30px; font-weight: 600; }
.msg { grid-area: 2 / 3 / 3 / 5; background: #fff; color: #1b1b1b; font-size: 25px; font-weight: 700; line-height: 64px; padding-left: 20px; white-space: nowrap; }
.ticker { height: 42px; flex: none; display: flex; justify-content: space-between; align-items: center; background: #e7eaf6; color: #343640; font: 700 28px/40px Lato, sans-serif; padding: 0 4px 2px 0; white-space: nowrap; }
.run { margin-left: -7px; }
</style>
